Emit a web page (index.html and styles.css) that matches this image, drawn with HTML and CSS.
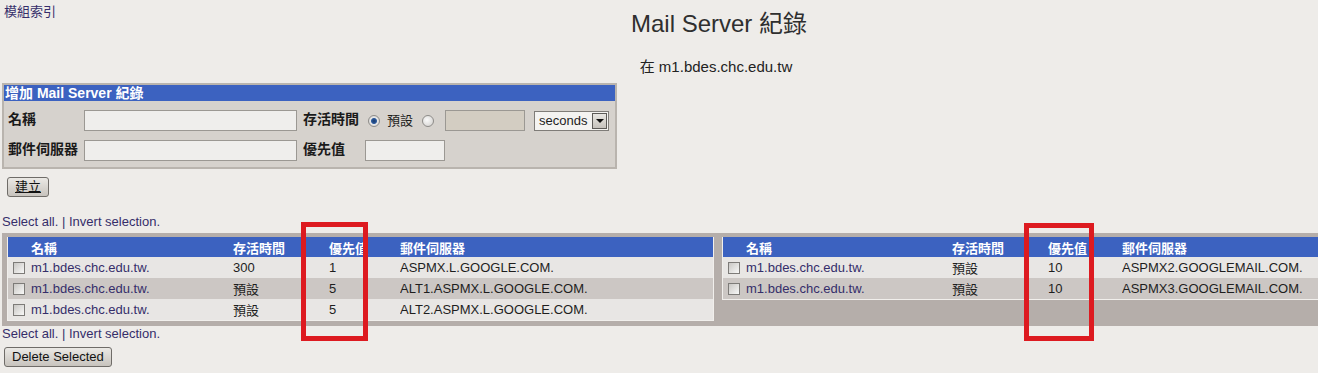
FILE: index.html
```html
<!DOCTYPE html>
<html lang="zh-Hant">
<head>
    <meta charset="UTF-8">
    <meta name="viewport" content="width=device-width, initial-scale=1.0">
    <title>Mail Server 紀錄</title>
    <link rel="stylesheet" href="styles.css">
</head>
<body>
    <div class="page">
        <div class="top">
            <div class="top-left">
                <a href="#" class="link">模組索引</a>
            </div>
            <div class="top-center">
                <h1 class="title">Mail Server 紀錄</h1>
                <p class="sub-title">在 m1.bdes.chc.edu.tw</p>
            </div>
        </div>

        <form class="add-box">
            <div class="add-title">增加 Mail Server 紀錄</div>
            <div class="add-grid">
                <label class="field-label">名稱</label>
                <div><input type="text" class="text-input wide-input" /></div>
                <label class="field-label">存活時間</label>
                <div class="ttl-field">
                    <span class="radio checked"></span>
                    <span class="radio-text">預設</span>
                    <span class="radio second"></span>
                    <input type="text" class="text-input ttl-input" disabled />
                    <div class="select">
                        <span class="select-text">seconds</span>
                        <span class="select-arrow"><span class="arrow-tri"></span></span>
                    </div>
                </div>
                <label class="field-label">郵件伺服器</label>
                <div><input type="text" class="text-input wide-input" /></div>
                <label class="field-label">優先值</label>
                <div><input type="text" class="text-input pri-input" /></div>
            </div>
        </form>

        <button class="btn create-btn" type="button"><u>建立</u></button>

        <div class="select-links">
            <a href="#" class="link">Select all.</a> | <a href="#" class="link">Invert selection.</a>
        </div>

        <div class="lists">
            <table class="list left-list">
                <thead>
                    <tr>
                        <th class="c-chk"></th>
                        <th class="c-name">名稱</th>
                        <th class="c-ttl">存活時間</th>
                        <th class="c-pri">優先值</th>
                        <th class="c-mail">郵件伺服器</th>
                    </tr>
                </thead>
                <tbody>
                    <tr>
                        <td><span class="check"></span></td>
                        <td><a href="#" class="link">m1.bdes.chc.edu.tw.</a></td>
                        <td>300</td>
                        <td>1</td>
                        <td>ASPMX.L.GOOGLE.COM.</td>
                    </tr>
                    <tr>
                        <td><span class="check"></span></td>
                        <td><a href="#" class="link">m1.bdes.chc.edu.tw.</a></td>
                        <td>預設</td>
                        <td>5</td>
                        <td>ALT1.ASPMX.L.GOOGLE.COM.</td>
                    </tr>
                    <tr>
                        <td><span class="check"></span></td>
                        <td><a href="#" class="link">m1.bdes.chc.edu.tw.</a></td>
                        <td>預設</td>
                        <td>5</td>
                        <td>ALT2.ASPMX.L.GOOGLE.COM.</td>
                    </tr>
                </tbody>
            </table>
            <table class="list right-list">
                <thead>
                    <tr>
                        <th class="c-chk"></th>
                        <th class="c-name">名稱</th>
                        <th class="c-ttl">存活時間</th>
                        <th class="c-pri">優先值</th>
                        <th class="c-mail">郵件伺服器</th>
                    </tr>
                </thead>
                <tbody>
                    <tr>
                        <td><span class="check"></span></td>
                        <td><a href="#" class="link">m1.bdes.chc.edu.tw.</a></td>
                        <td>預設</td>
                        <td>10</td>
                        <td>ASPMX2.GOOGLEMAIL.COM.</td>
                    </tr>
                    <tr>
                        <td><span class="check"></span></td>
                        <td><a href="#" class="link">m1.bdes.chc.edu.tw.</a></td>
                        <td>預設</td>
                        <td>10</td>
                        <td>ASPMX3.GOOGLEMAIL.COM.</td>
                    </tr>
                </tbody>
            </table>
        </div>

        <div class="select-links">
            <a href="#" class="link">Select all.</a> | <a href="#" class="link">Invert selection.</a>
        </div>

        <button class="btn delete-btn" type="button">Delete Selected</button>

        <!-- red highlight boxes drawn over the priority columns -->
        <div class="mark mark-left"></div>
        <div class="mark mark-right"></div>
    </div>
</body>
</html>
```

FILE: styles.css
```css
html, body {
    margin: 0;
    overflow: hidden;
}
body {
    font-family: "Liberation Sans", "Noto Sans CJK TC", sans-serif;
    font-size: 13px;
    color: #1e1e1e;
    background: #eeece9;
}
.page {
    position: relative;
    min-height: 373px;
}
.link {
    color: #352e6a;
    text-decoration: none;
}
.top {
    display: grid;
    grid-template-columns: 120px 1fr;
}
.top-left {
    padding: 4px 0 0 4px;
    line-height: 16px;
}
.top-center {
    text-align: center;
}
.title {
    margin: 10px 0 0;
    font-size: 24px;
    line-height: 28px;
    font-weight: normal;
    color: #2f2f2f;
}
.sub-title {
    margin: 20px 0 0;
    padding-right: 6px;
    font-size: 15px;
    line-height: 18px;
    color: #222;
}
.add-box {
    box-sizing: border-box;
    width: 615px;
    margin: 7px 0 0 2px;
    border: 2px solid #b9b4ae;
    background: #d6d2cd;
}
.add-title {
    height: 16px;
    line-height: 16px;
    padding-left: 1px;
    background: #3c62c0;
    color: white;
    font-size: 14px;
    font-weight: bold;
}
.add-grid {
    display: grid;
    grid-template-columns: 76px 219px 62px 1fr;
    grid-auto-rows: 21px;
    row-gap: 9px;
    align-items: center;
    padding: 9px 0 6px 4px;
}
.field-label {
    align-self: start;
    padding-top: 1px;
    font-size: 14px;
    line-height: 16px;
    font-weight: bold;
    color: #1a1a1a;
}
.text-input {
    box-sizing: border-box;
    display: block;
    height: 21px;
    margin: 0;
    padding: 0 3px;
    border: 1px solid #9b9893;
    background: #efeeec;
    font: inherit;
}
.wide-input {
    width: 213px;
}
.pri-input {
    width: 80px;
}
.ttl-field {
    display: flex;
    align-items: center;
}
.radio {
    box-sizing: border-box;
    width: 12px;
    height: 12px;
    margin-left: 3px;
    border-radius: 50%;
    border: 1px solid #8e8c89;
    background: radial-gradient(circle at 40% 40%, #fafafa, #cfcdca);
}
.radio.checked {
    background: radial-gradient(circle, #16386a 0, #2d5a9c 2.5px, #e6e6e6 3.5px, #cfcdca 100%);
}
.radio.second {
    margin-left: 9px;
}
.radio-text {
    margin-left: 7px;
    line-height: 16px;
}
.ttl-input {
    width: 80px;
    margin-left: 11px;
    background: #d3cdc2;
}
.select {
    box-sizing: border-box;
    display: flex;
    align-items: center;
    width: 75px;
    height: 20px;
    margin-left: 9px;
    border: 1px solid #7f7c78;
    background: #f4f3f1;
}
.select-text {
    flex: 1;
    padding-left: 4px;
    line-height: 18px;
}
.select-arrow {
    box-sizing: border-box;
    display: flex;
    justify-content: center;
    align-items: center;
    width: 15px;
    height: 16px;
    margin-right: 1px;
    border: 1px solid #5c5a57;
    background: linear-gradient(#e8e6e2, #c6c2bc);
}
.arrow-tri {
    width: 0;
    height: 0;
    border-left: 4px solid transparent;
    border-right: 4px solid transparent;
    border-top: 4px solid #111;
}
.btn {
    display: block;
    box-sizing: border-box;
    height: 20px;
    padding: 0 7px;
    border: 1px solid #6f6c68;
    border-radius: 3px;
    background: linear-gradient(#ebe9e5, #c7c3bd);
    color: #111;
    font: inherit;
    line-height: 18px;
}
.create-btn {
    margin: 8px 0 0 7px;
}
.delete-btn {
    margin: 6px 0 0 4px;
}
.select-links {
    margin-top: 17px;
    padding-left: 2px;
    line-height: 15px;
    color: #352e6a;
}
.lists + .select-links {
    margin-top: 0;
}
.lists {
    box-sizing: border-box;
    display: flex;
    align-items: flex-start;
    gap: 8px;
    width: calc(100% - 2px);
    margin: 4px 0 0 2px;
    padding: 4px 0 5px 5px;
    background: #b5aeaa;
}
.list {
    table-layout: fixed;
    border-collapse: separate;
    border-spacing: 0;
    border: 1px solid #f1efec;
    border-top: 0;
}
.left-list {
    width: 707px;
}
.right-list {
    width: 596px;
    border-right: 0;
}
.list th {
    height: 20px;
    padding: 0;
    text-align: left;
    background: #3c62c0;
    color: white;
    font-weight: bold;
    font-size: 13px;
}
.list td {
    height: 21px;
    padding: 0;
    white-space: nowrap;
    overflow: hidden;
}
.list tbody tr:nth-child(odd) {
    background: #e8e6e4;
}
.list tbody tr:nth-child(even) {
    background: #ccc7c4;
}
.c-chk {
    width: 23px;
}
.c-ttl {
    width: 96px;
}
.left-list .c-name {
    width: 202px;
}
.left-list .c-pri {
    width: 71px;
}
.right-list .c-name {
    width: 206px;
}
.right-list .c-pri {
    width: 74px;
}
.check {
    box-sizing: border-box;
    display: block;
    width: 12px;
    height: 12px;
    margin-left: 5px;
    border: 1px solid #7d7b78;
    background: linear-gradient(135deg, #c9c7c4, #f8f8f7);
}
.mark {
    position: absolute;
    box-sizing: border-box;
    border: 5px solid #dd1a20;
}
.mark-left {
    left: 301px;
    top: 222px;
    width: 67px;
    height: 119px;
}
.mark-right {
    left: 1024px;
    top: 223px;
    width: 70px;
    height: 118px;
}
```
